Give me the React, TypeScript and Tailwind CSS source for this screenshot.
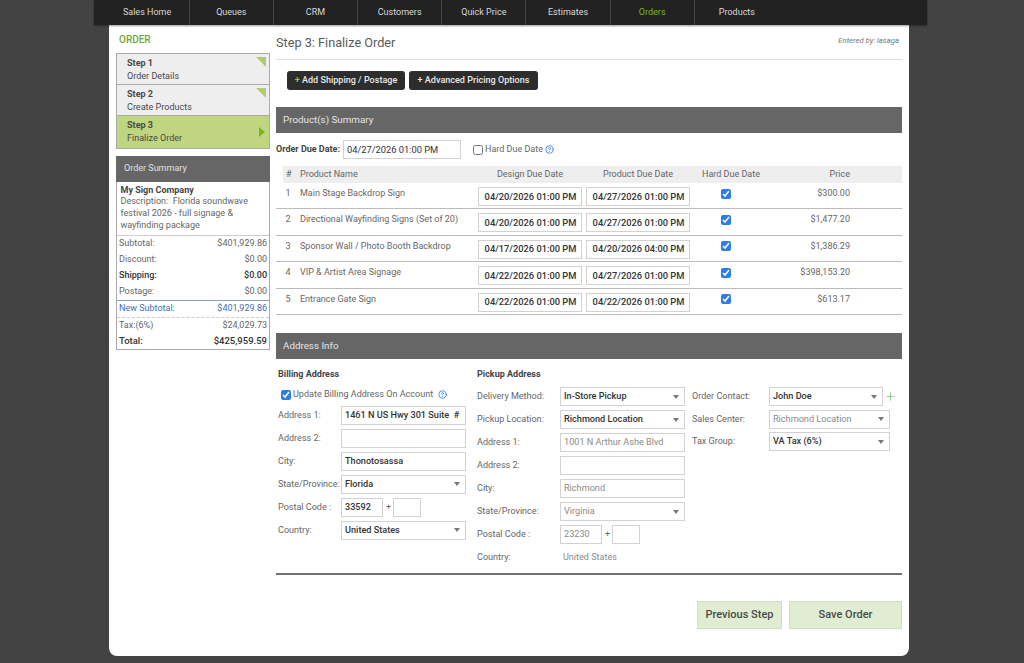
import { CircleHelp, Plus } from "lucide-react"

const navItems = ["Sales Home", "Queues", "CRM", "Customers", "Quick Price", "Estimates", "Orders", "Products"]

const steps = [
  { num: "Step 1", name: "Order Details", done: true },
  { num: "Step 2", name: "Create Products", done: true },
  { num: "Step 3", name: "Finalize Order", done: false },
]

const products = [
  { name: "Main Stage Backdrop Sign", design: "04/20/2026 01:00 PM", due: "04/27/2026 01:00 PM", price: "$300.00" },
  { name: "Directional Wayfinding Signs (Set of 20)", design: "04/20/2026 01:00 PM", due: "04/27/2026 01:00 PM", price: "$1,477.20" },
  { name: "Sponsor Wall / Photo Booth Backdrop", design: "04/17/2026 01:00 PM", due: "04/20/2026 04:00 PM", price: "$1,386.29" },
  { name: "VIP & Artist Area Signage", design: "04/22/2026 01:00 PM", due: "04/27/2026 01:00 PM", price: "$398,153.20" },
  { name: "Entrance Gate Sign", design: "04/22/2026 01:00 PM", due: "04/22/2026 01:00 PM", price: "$613.17" },
]

function SectionBar({ title }: { title: string }) {
  return <div className="h-[26px] bg-[#666666] pl-[7px] flex items-center text-[9.8px] text-[#e4e4e4]">{title}</div>
}

function Caret() {
  return <span className="w-0 h-0 border-x-[3.5px] border-x-transparent border-t-[4px] border-t-[#777777]" />
}

function Box({ value, muted, select, className }: { value?: string; muted?: boolean; select?: boolean; className: string }) {
  return (
    <div
      className={`h-[19px] border border-[#d2d2d2] bg-white flex items-center justify-between pl-[3px] pr-[5px] text-[9.15px] shrink-0 ${
        muted ? "text-[#8a8a8a]" : "text-[#333333] font-medium"
      } ${className}`}
    >
      <span className="whitespace-pre">{value}</span>
      {select && <Caret />}
    </div>
  )
}

function Row({ label, labelW, children }: { label: string; labelW: string; children: React.ReactNode }) {
  return (
    <div className="flex items-center h-[19px] mb-[4px]">
      <span className={`text-[9.05px] text-[#666666] shrink-0 ${labelW}`}>{label}</span>
      {children}
    </div>
  )
}

function PostalBox({ code, muted }: { code: string; muted?: boolean }) {
  return (
    <>
      <Box value={code} muted={muted} className="w-[42px]" />
      <span className="w-[9px] text-center text-[9px] text-[#666666] ml-[1px]">+</span>
      <Box className="w-[28px]" />
    </>
  )
}

function SummaryRow({ label, value, className }: { label: string; value: string; className?: string }) {
  return (
    <div className={`h-[16px] flex items-center justify-between pl-[2px] pr-[2px] text-[9px] ${className ?? "text-[#666666]"}`}>
      <span>{label}</span>
      <span>{value}</span>
    </div>
  )
}

export default function App() {
  return (
    <div className="min-h-[663px] bg-[#434343] font-['Roboto',sans-serif] pb-[7px]">
      <div className="ml-[94px] w-[833px] h-[25px] bg-[#222222] pl-[11.5px] flex relative z-10 shadow-[0_1px_2px_rgba(0,0,0,0.4)]">
        {navItems.map((item) => (
          <div
            key={item}
            className={`w-[84.2px] flex items-center justify-center text-[9px] border-r border-[#444444] last:border-r-0 ${
              item === "Orders" ? "text-[#7ab51d]" : "text-[#d8d8d8]"
            }`}
          >
            {item}
          </div>
        ))}
      </div>

      <div className="ml-[109px] w-[800px] h-[631px] bg-white rounded-b-[8px] flex pl-[7px] pr-[7px] gap-[6px]">
        <aside className="w-[154px] shrink-0">
          <div className="h-[28px] pt-[8px] pl-[3px] text-[10px] font-medium leading-[14px] text-[#6fa83a]">ORDER</div>
          <div className="border border-[#aaaaaa]">
            {steps.map((s, i) => (
              <div
                key={s.num}
                className={`relative h-[31.2px] pl-[10px] pt-[3px] text-[9.05px] leading-[13px] ${
                  s.done ? "bg-[#eeeeee]" : "bg-[#bfd57f]"
                } ${i < 2 ? "border-b border-[#aaaaaa]" : ""}`}
              >
                <div className="font-bold text-[#4a4a4a]">{s.num}</div>
                <div className="text-[#4a4a4a]">{s.name}</div>
                {s.done ? (
                  <span className="absolute top-[3px] right-[3px] w-0 h-0 border-l-[10px] border-l-transparent border-t-[10px] border-t-[#afcc72]" />
                ) : (
                  <span className="absolute top-[11px] right-[4px] w-0 h-0 border-y-[5px] border-y-transparent border-l-[6px] border-l-[#7ab51d]" />
                )}
              </div>
            ))}
          </div>

          <div className="mt-[7px] border border-[#aaaaaa] border-t-0">
            <div className="h-[26px] -mx-px bg-[#666666] pl-[8px] flex items-center text-[9px] text-[#e0e0e0]">Order Summary</div>
            <div className="h-[54px] pt-[3px] pl-[3.5px] pr-[3px] text-[9px] leading-[11.8px] text-[#666666] border-b border-[#cccccc]">
              <div className="font-bold text-[#444444]">My Sign Company</div>
              <div>Description:&nbsp; Florida soundwave festival 2026 - full signage &amp; wayfinding package</div>
            </div>
            <div className="pt-[0.5px]">
              <SummaryRow label="Subtotal:" value="$401,929.86" />
              <SummaryRow label="Discount:" value="$0.00" />
              <SummaryRow label="Shipping:" value="$0.00" className="text-[#333333] font-medium" />
              <SummaryRow label="Postage:" value="$0.00" />
            </div>
            <div className="border-t border-[#8aa0bd] border-b border-b-[#cccccc] [border-bottom-style:dashed]">
              <SummaryRow label="New Subtotal:" value="$401,929.86" className="text-[#3f6fae]" />
            </div>
            <SummaryRow label="Tax:(6%)" value="$24,029.73" />
            <div className="h-[15px] flex items-center justify-between pl-[2px] pr-[2px] text-[9.5px] font-medium text-[#333333]">
              <span>Total:</span>
              <span>$425,959.59</span>
            </div>
          </div>
        </aside>

        <main className="w-[626px] shrink-0">
          <div className="h-[35px] border-b border-[#dddddd] flex justify-between">
            <h1 className="pt-[10px] text-[12.7px] leading-[16px] text-[#5a5a5a]">Step 3: Finalize Order</h1>
            <span className="pt-[9px] pr-[3px] text-[7.7px] leading-[14px] italic text-[#777777]">Entered by: lasaga</span>
          </div>

          <div className="flex gap-[4px] pl-[11px] pt-[11px] pb-[17px]">
            <button className="h-[19px] w-[118px] rounded-[3px] bg-[#2d2d2d] text-[9.05px] font-medium text-[#e8e8e8]">
              <span className="text-[#a7c93a]">+</span> Add Shipping / Postage
            </button>
            <button className="h-[19px] w-[129px] rounded-[3px] bg-[#2d2d2d] text-[9.05px] font-medium text-[#e8e8e8]">
              + Advanced Pricing Options
            </button>
          </div>

          <SectionBar title="Product(s) Summary" />

          <div className="flex items-center h-[19px] mt-[7px] text-[9px]">
            <span className="font-bold text-[#444444] w-[67px] whitespace-nowrap">Order Due Date:</span>
            <Box value="04/27/2026 01:00 PM" className="w-[118px] !text-[#333333] !font-normal !text-[9.3px]" />
            <input type="checkbox" readOnly className="ml-[12px] w-[10px] h-[10px] m-0" />
            <span className="ml-[2px] text-[#666666]">Hard Due Date</span>
            <CircleHelp size={9} strokeWidth={2.2} className="ml-[2px] text-[#2b7de9]" />
          </div>

          <div className="mt-[7px] ml-[7px] h-[17px] bg-[#eeeeee] grid grid-cols-[17px_178px_104px_4px_104px_72px_88px] items-center text-[9px] text-[#666666]">
            <span className="pl-[3px]">#</span>
            <span>Product Name</span>
            <span className="text-center">Design Due Date</span>
            <span />
            <span className="text-center">Product Due Date</span>
            <span className="text-center pl-[10px]">Hard Due Date</span>
            <span className="text-right">Price</span>
          </div>

          {products.map((p, i) => (
            <div
              key={p.name}
              className="h-[26.4px] border-b border-[#bbbbbb] grid grid-cols-[24px_178px_104px_4px_104px_72px_88px] text-[9px] text-[#666666]"
            >
              <span className="text-center pt-[4px] leading-[12px]">{i + 1}</span>
              <span className="pt-[4px] leading-[12px]">{p.name}</span>
              <Box value={p.design} className="w-[104px] mt-[4px] justify-center !pl-[6px] !text-[9.3px]" />
              <span />
              <Box value={p.due} className="w-[104px] mt-[4px] justify-center !pl-[6px] !text-[9.3px]" />
              <span className="flex justify-center pt-[5.5px]">
                <input type="checkbox" checked readOnly className="w-[10px] h-[10px] m-0 accent-[#2b7de9]" />
              </span>
              <span className="text-right pt-[4px] leading-[12px]">{p.price}</span>
            </div>
          ))}

          <div className="mt-[18px]">
            <SectionBar title="Address Info" />
          </div>

          <div className="flex h-[216px] border-b-2 border-[#707070]">
            <section className="w-[201px] pl-[2px] shrink-0">
              <h3 className="pt-[9px] h-[25px] text-[9px] leading-[12px] font-bold text-[#444444]">Billing Address</h3>
              <div className="h-[22px] flex items-center pl-[3px] text-[9.05px] text-[#666666]">
                <input type="checkbox" checked readOnly className="w-[10px] h-[10px] m-0 accent-[#2b7de9]" />
                <span className="ml-[2px]">Update Billing Address On Account</span>
                <CircleHelp size={9} strokeWidth={2.2} className="ml-[5px] text-[#2b7de9]" />
              </div>
              <Row label="Address 1:" labelW="w-[63px]"><Box value="1461 N US Hwy 301 Suite  #" className="w-[125px]" /></Row>
              <Row label="Address 2:" labelW="w-[63px]"><Box className="w-[125px]" /></Row>
              <Row label="City:" labelW="w-[63px]"><Box value="Thonotosassa" className="w-[125px]" /></Row>
              <Row label="State/Province:" labelW="w-[63px]"><Box value="Florida" select className="w-[125px]" /></Row>
              <Row label="Postal Code :" labelW="w-[63px]"><PostalBox code="33592" /></Row>
              <Row label="Country:" labelW="w-[63px]"><Box value="United States" select className="w-[125px]" /></Row>
            </section>

            <section className="w-[215px] shrink-0">
              <h3 className="pt-[9px] h-[28.5px] text-[9px] leading-[12px] font-bold text-[#444444]">Pickup Address</h3>
              <Row label="Delivery Method:" labelW="w-[83px]"><Box value="In-Store Pickup" select className="w-[125px]" /></Row>
              <Row label="Pickup Location:" labelW="w-[83px]"><Box value="Richmond Location" select className="w-[125px]" /></Row>
              <Row label="Address 1:" labelW="w-[83px]"><Box value="1001 N Arthur Ashe Blvd" muted className="w-[125px]" /></Row>
              <Row label="Address 2:" labelW="w-[83px]"><Box muted className="w-[125px]" /></Row>
              <Row label="City:" labelW="w-[83px]"><Box value="Richmond" muted className="w-[125px]" /></Row>
              <Row label="State/Province:" labelW="w-[83px]"><Box value="Virginia" muted select className="w-[125px]" /></Row>
              <Row label="Postal Code :" labelW="w-[83px]"><PostalBox code="23230" muted /></Row>
              <div className="flex items-center h-[19px] text-[9.05px] text-[#666666]">
                <span className="w-[86px]">Country:</span>
                <span className="text-[#8a8a8a]">United States</span>
              </div>
            </section>

            <section className="flex-1 pt-[28.5px] [&>div]:mb-[3.5px]">
              <Row label="Order Contact:" labelW="w-[77px]">
                <Box value="John Doe" select className="w-[114px]" />
                <Plus size={13} strokeWidth={1} className="ml-[1px] text-[#4caf50]" />
              </Row>
              <Row label="Sales Center:" labelW="w-[77px]"><Box value="Richmond Location" muted select className="w-[121px]" /></Row>
              <Row label="Tax Group:" labelW="w-[77px]"><Box value="VA Tax (6%)" select className="w-[121px]" /></Row>
            </section>
          </div>

          <div className="flex justify-end gap-[7px] pt-[26px]">
            <button className="w-[85px] h-[28px] bg-[#e1edd3] border border-[#d3dfc2] text-[11px] font-medium text-[#4a4a4a]">Previous Step</button>
            <button className="w-[113px] h-[28px] bg-[#e1edd3] border border-[#d3dfc2] text-[11px] font-medium text-[#4a4a4a]">Save Order</button>
          </div>
        </main>
      </div>
    </div>
  )
}
